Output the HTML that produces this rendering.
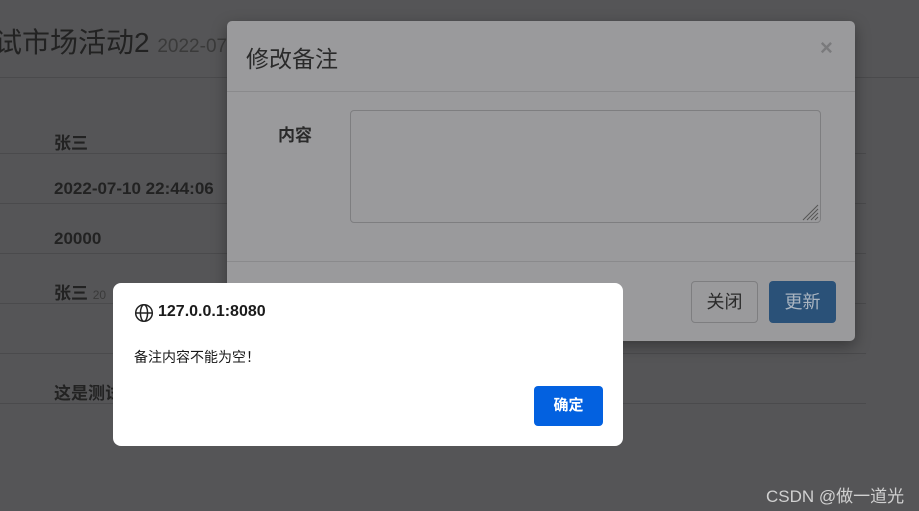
<!DOCTYPE html>
<html><head><meta charset="utf-8"><style>
*{margin:0;padding:0;box-sizing:border-box}
body{width:919px;height:511px;overflow:hidden;background:#555557;font-family:"Liberation Sans","Noto Sans CJK SC",sans-serif;position:relative;color:#222}
.a{position:absolute}
.ln{position:absolute;left:0;width:866px;height:1px;background:#4a4a4c}
.b{font-weight:bold;font-size:17px;color:#222;position:absolute;left:54px}
</style></head><body>
<div class="a" style="left:-6px;top:21px;font-size:28px;color:#222">试市场活动2 <span style="font-size:19px;color:#3a3a3a">2022-07</span></div>
<div class="ln" style="top:77px;width:919px"></div>
<div class="b" style="top:129px">张三</div><div class="ln" style="top:153px"></div>
<div class="b" style="top:179px">2022-07-10 22:44:06</div><div class="ln" style="top:203px"></div>
<div class="b" style="top:229px">20000</div><div class="ln" style="top:253px"></div>
<div class="b" style="top:279px">张三 <span style="font-weight:normal;font-size:12px;color:#3a3a3a">20</span></div><div class="ln" style="top:303px"></div>
<div class="ln" style="top:353px"></div>
<div class="b" style="top:379px">这是测试</div><div class="ln" style="top:403px"></div>

<div class="a" style="left:227px;top:21px;width:628px;height:320px;background:#9a9a9c;border-radius:5px;box-shadow:0 5px 15px rgba(0,0,0,.35)">
 <div class="a" style="left:19px;top:19px;font-size:23px;color:#2a2a2a">修改备注</div>
 <div class="a" style="left:593px;top:14px;font-size:22px;font-weight:bold;color:#7a7a7c">×</div>
 <div class="a" style="left:0;top:70px;width:628px;height:1px;background:#8a8a8c"></div>
 <div class="a" style="left:51px;top:100px;font-size:17px;font-weight:bold;color:#2a2a2a">内容</div>
 <div class="a" style="left:123px;top:89px;width:471px;height:113px;border:1px solid #7e7e80;border-radius:4px">
  <svg class="a" style="right:1px;bottom:1px" width="18" height="18"><g stroke="#555" stroke-width="1"><line x1="17" y1="2" x2="2" y2="17"/><line x1="17" y1="6" x2="6" y2="17"/><line x1="17" y1="10" x2="10" y2="17"/><line x1="17" y1="14" x2="14" y2="17"/></g></svg>
 </div>
 <div class="a" style="left:0;top:240px;width:628px;height:1px;background:#8a8a8c"></div>
 <div class="a" style="left:464px;top:260px;width:67px;height:42px;border:1px solid #7e7e80;border-radius:4px;font-size:18px;line-height:40px;text-align:center;color:#2a2a2a">关闭</div>
 <div class="a" style="left:542px;top:260px;width:67px;height:42px;background:#2a5178;border-radius:4px;font-size:18px;line-height:42px;text-align:center;color:#a9b4c0">更新</div>
</div>

<div class="a" style="left:113px;top:283px;width:510px;height:163px;background:#fff;border-radius:8px">
 <svg class="a" style="left:21px;top:20px" width="20" height="20" viewBox="0 0 20 20" fill="none" stroke="#222" stroke-width="1.5"><circle cx="10" cy="10" r="8.3"/><ellipse cx="10" cy="10" rx="3.6" ry="8.3"/><line x1="1.7" y1="10" x2="18.3" y2="10"/></svg>
 <div class="a" style="left:45px;top:20px;font-size:16px;font-weight:bold;color:#1a1a1a">127.0.0.1:8080</div>
 <div class="a" style="left:21px;top:64px;font-size:14px;color:#1a1a1a">备注内容不能为空！</div>
 <div class="a" style="left:421px;top:103px;width:69px;height:40px;background:#0361e0;border-radius:4px;color:#fff;font-size:15px;font-weight:bold;line-height:40px;text-align:center">确定</div>
</div>
<div class="a" style="left:766px;top:482px;font-size:17px;color:#d0d0d0">CSDN @做一道光</div>
</body></html>
